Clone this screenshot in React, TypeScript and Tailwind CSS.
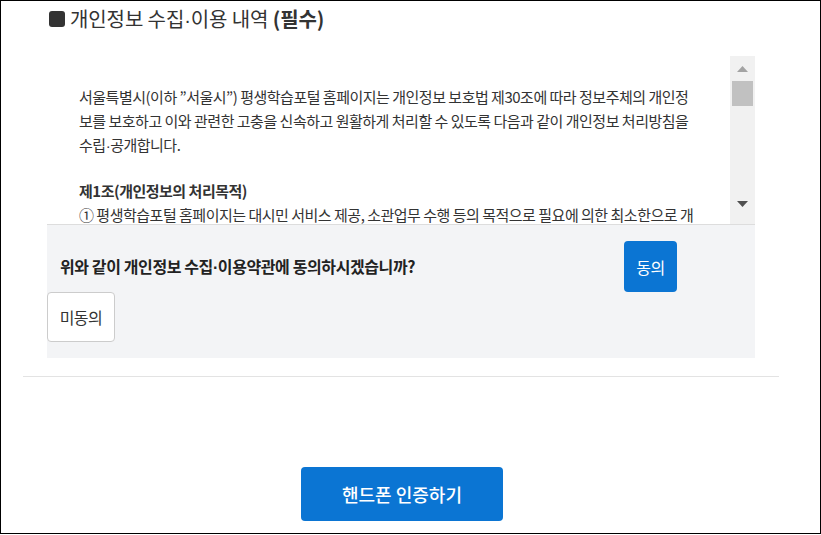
import React from "react";

const Dot = () => <span className="font-['Liberation_Sans',sans-serif]">·</span>;

export default function App() {
  return (
    <div className="w-[821px] h-[534px] border border-black bg-white overflow-hidden font-['Noto_Sans_CJK_KR','Noto_Sans',sans-serif] text-[#333]">
      <div className="ml-[22px] w-[756px]">
        <div className="px-[24px]">
          <h3 className="mt-[4px] flex items-center h-[28px] text-[20px] tracking-[-0.005em] text-[#333]">
            <span className="ml-[2px] mr-[5px] inline-block w-[16px] h-[16px] rounded-[3px] bg-[#333]" />
            <span>
              개인정보 수집<Dot />이용 내역 <span className="font-bold">(필수)</span>
            </span>
          </h3>

          <div className="mt-[23px] flex h-[169px] border-b border-[#dddddd]">
            <div className="flex-1 overflow-hidden pt-[29px] pl-[32px] text-[15px] leading-[24px] tracking-[-0.033em] text-[#333] whitespace-nowrap">
              <p>
                서울특별시(이하 ”서울시”) 평생학습포털 홈페이지는 개인정보 보호법 제30조에 따라 정보주체의 개인정
                <br />
                보를 보호하고 이와 관련한 고충을 신속하고 원활하게 처리할 수 있도록 다음과 같이 개인정보 처리방침을
                <br />
                수립<Dot />공개합니다.
              </p>
              <p className="h-[21px]" />
              <p className="font-bold">제1조(개인정보의 처리목적)</p>
              <p>① 평생학습포털 홈페이지는 대시민 서비스 제공, 소관업무 수행 등의 목적으로 필요에 의한 최소한으로 개</p>
            </div>
            <div className="w-[25px] bg-[#f1f1f1] flex flex-col items-center">
              <div className="h-[25px] w-full flex items-center justify-center">
                <svg width="11" height="6" viewBox="0 0 11 6">
                  <polygon points="5.5,0 11,6 0,6" fill="#a3a3a3" />
                </svg>
              </div>
              <div className="w-[21px] h-[25px] bg-[#c1c1c1]" />
              <div className="flex-1" />
              <div className="h-[25px] w-full flex items-start justify-center pt-[2px]">
                <svg width="11" height="6" viewBox="0 0 11 6">
                  <polygon points="0,0 11,0 5.5,6" fill="#505050" />
                </svg>
              </div>
            </div>
          </div>

          <div className="bg-[#f3f4f6] pt-[16px] pb-[16px]">
            <div className="flex items-center">
              <p className="w-[577px] pl-[13px] text-[16px] font-bold tracking-[-0.025em] text-[#222]">
                위와 같이 개인정보 수집<Dot />이용약관에 동의하시겠습니까?
              </p>
              <button className="w-[53px] h-[51px] rounded-[4px] bg-[#0b75d3] text-white text-[16px] tracking-[-0.03em]">
                동의
              </button>
            </div>
            <button className="w-[68px] h-[50px] rounded-[4px] bg-white border border-[#cccccc] text-[16px] text-[#333] tracking-[-0.03em]">
              미동의
            </button>
          </div>
        </div>

        <div className="mt-[18px] border-t border-[#e3e3e3]" />

        <div className="mt-[90px] flex justify-center">
          <button className="ml-[2px] w-[202px] h-[54px] rounded-[4px] bg-[#0b75d3] text-white text-[18px] font-medium">
            핸드폰 인증하기
          </button>
        </div>
      </div>
    </div>
  );
}
